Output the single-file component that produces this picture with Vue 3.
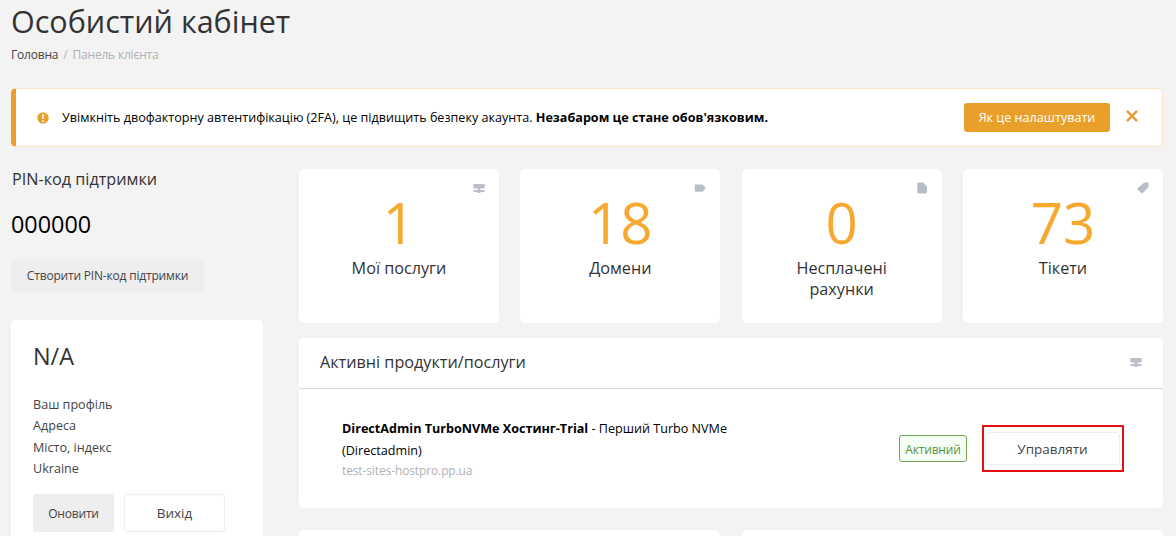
<script setup>
import { ref } from 'vue'

const showAlert = ref(true)

const stats = [
  { icon: 'server', value: 1, label: 'Мої послуги' },
  { icon: 'domain', value: 18, label: 'Домени' },
  { icon: 'invoice', value: 0, label: 'Несплачені рахунки' },
  { icon: 'ticket', value: 73, label: 'Тікети' }
]

const icons = {
  server: 'M.4 2h11.2v4.4H.4z M5 6.3h2v1.3H5z M.4 8h3.8l.6-.8h2.4l.6.8h3.8v1.9H7.8l-.6 1H4.8l-.6-1H.4z',
  domain: 'M.8 2.4h7.4q.6 0 1 .5l2.5 3.2-2.5 3.2q-.4.5-1 .5H.8z',
  invoice: 'M2.1.6h5l3.9 4v6q0 .8-.8.8H2.1q-.8 0-.8-.8V1.4q0-.8.8-.8z',
  ticket: 'M6.6 1q.4-.4 1-.4h3.2q.8 0 .8.8v3.1q0 .6-.4 1l-5.5 5.4q-.6.6-1.2 0L.6 7.5q-.6-.6 0-1.2z'
}

const profile = ['Ваш профіль', 'Адреса', 'Місто, індекс', 'Ukraine']
</script>

<template>
  <div class="page">
    <h1>Особистий кабінет</h1>
    <nav class="breadcrumb">
      <a>Головна</a><span class="separator">/</span><span>Панель клієнта</span>
    </nav>

    <div v-if="showAlert" class="alert">
      <svg class="alert-icon" viewBox="0 0 12 12">
        <circle cx="6" cy="6" r="5.7" fill="#e9a02b" />
        <path d="M6 3v3" stroke="#fff" stroke-width="1.8" stroke-linecap="round" />
        <circle cx="6" cy="8.9" r="1" fill="#fff" />
      </svg>
      <p>
        Увімкніть двофакторну автентифікацію (2FA), це підвищить безпеку акаунта.
        <strong>Незабаром це стане обов'язковим.</strong>
      </p>
      <button class="btn-warning">Як це налаштувати</button>
      <button class="close" @click="showAlert = false">
        <svg viewBox="0 0 12 12">
          <path d="M1.7 1.7l8.6 8.6M10.3 1.7l-8.6 8.6" stroke="#e5a03a" stroke-width="2.5" stroke-linecap="round" />
        </svg>
      </button>
    </div>

    <div class="columns">
      <aside class="sidebar">
        <h4>PIN-код підтримки</h4>
        <div class="pin">000000</div>
        <button class="btn-pin">Створити PIN-код підтримки</button>

        <div class="card profile">
          <h2>N/A</h2>
          <ul>
            <li v-for="line in profile" :key="line">{{ line }}</li>
          </ul>
          <div class="profile-buttons">
            <button class="btn-update">Оновити</button>
            <button class="btn-outline">Вихід</button>
          </div>
        </div>
      </aside>

      <main>
        <div class="stats">
          <div v-for="stat in stats" :key="stat.icon" class="card stat">
            <svg class="icon stat-icon" viewBox="0 0 12 12"><path :d="icons[stat.icon]" /></svg>
            <div class="value">{{ stat.value }}</div>
            <div class="label">{{ stat.label }}</div>
          </div>
        </div>

        <section class="card products">
          <header>
            <h3>Активні продукти/послуги</h3>
            <svg class="icon" viewBox="0 0 12 12"><path :d="icons.server" /></svg>
          </header>
          <div class="product">
            <div class="product-info">
              <div><strong>DirectAdmin TurboNVMe Хостинг-Trial</strong> - Перший Turbo NVMe (Directadmin)</div>
              <div class="domain">test-sites-hostpro.pp.ua</div>
            </div>
            <span class="status">Активний</span>
            <div class="highlight">
              <button class="btn-outline btn-manage">Управляти</button>
            </div>
          </div>
        </section>

        <div class="panels">
          <section class="card"></section>
          <section class="card"></section>
        </div>
      </main>
    </div>
  </div>
</template>

<style>
body {
  background: #f3f3f3;
  overflow: hidden;
}
</style>

<style scoped>
.page {
  box-sizing: border-box;
  height: 536px;
  padding: 1px 13px 0 11px;
  overflow: hidden;
  background: #f3f3f3;
  color: #000;
  font-family: "Open Sans", "Noto Sans", sans-serif;
  font-size: 12.6px;
}

.page * {
  box-sizing: border-box;
}

h1, h2, h3, h4, p, ul {
  margin: 0;
  padding: 0;
  font-weight: 400;
  color: #333;
}

button {
  padding: 0;
  border: none;
  font-family: inherit;
  font-size: 12px;
  letter-spacing: -0.19px;
  color: #444;
  cursor: pointer;
}

.card {
  background: #fff;
  border-radius: 5px;
}

.icon {
  width: 12px;
  height: 12px;
  fill: #b9bdc8;
}

h1 {
  font-size: 30.5px;
  line-height: 41px;
}

.breadcrumb {
  margin-top: 4px;
  font-size: 12px;
  letter-spacing: -0.2px;
  line-height: 18px;
  color: #aeb1b8;
}

.breadcrumb a {
  color: #444;
}

.separator {
  margin: 0 5px;
}

.alert {
  display: flex;
  align-items: center;
  height: 59px;
  margin-top: 24px;
  padding: 0 24px 0 21px;
  background: #fff;
  border: 1px solid #fbe3c3;
  border-left: 5px solid #e9a02b;
  border-radius: 5px;
}

.alert-icon {
  width: 12px;
  height: 12px;
  margin-right: 13px;
}

.alert p {
  flex: 1;
  padding-bottom: 1px;
  color: #000;
  white-space: nowrap;
}

.btn-warning {
  width: 146px;
  height: 29px;
  background: #e9a02b;
  border-radius: 3px;
  color: #fff;
  font-size: 12.6px;
  letter-spacing: 0;
}

.close {
  width: 12px;
  height: 12px;
  margin: -3px 0 0 16px;
  background: none;
}

.close svg {
  display: block;
}

.columns {
  display: flex;
  gap: 36px;
  margin-top: 22px;
}

.sidebar {
  width: 252px;
}

h4 {
  padding-left: 1px;
  font-size: 16.2px;
  line-height: 20px;
}

.pin {
  margin: 20px 0;
  font-size: 23.4px;
  line-height: 30px;
}

.btn-pin {
  display: block;
  width: 193px;
  height: 33px;
  background: #eee;
  border-radius: 3px;
}

.profile {
  height: 300px;
  margin-top: 28px;
  padding: 21px 22px;
}

h2 {
  font-size: 23.4px;
  line-height: 30px;
}

ul {
  margin-top: 23px;
  list-style: none;
  line-height: 21.4px;
  color: #444;
}

.profile-buttons {
  display: flex;
  gap: 10px;
  margin-top: 14.4px;
}

.btn-update {
  width: 81px;
  height: 38px;
  background: #eee;
  border-radius: 3px;
}

.btn-outline {
  width: 101px;
  height: 38px;
  background: #fff;
  border: 1px solid #eee;
  border-radius: 3px;
  font-size: 13.5px;
  letter-spacing: 0;
}

main {
  flex: 1;
}

.stats {
  display: grid;
  grid-template-columns: repeat(4, 200px);
  justify-content: space-between;
}

.stat {
  position: relative;
  height: 154px;
  padding: 29px 40px 0;
  text-align: center;
}

.stat-icon {
  position: absolute;
  top: 13px;
  right: 14px;
}

.value {
  font-size: 56.5px;
  line-height: 50px;
  color: #f7a92f;
}

.label {
  margin-top: 10px;
  font-size: 16.2px;
  line-height: 21px;
  color: #333;
}

.products {
  height: 170px;
  margin-top: 15px;
}

.products header {
  display: flex;
  align-items: center;
  justify-content: space-between;
  height: 51px;
  padding: 0 21px 2px;
  border-bottom: 1px solid #d9d9d9;
}

h3 {
  font-size: 16.2px;
}

.product {
  display: flex;
  align-items: center;
  height: 119px;
  padding: 0 39px 0 43px;
}

.product-info {
  width: 400px;
  margin-right: auto;
  padding-top: 2px;
  line-height: 21.4px;
}

.domain {
  font-size: 12px;
  letter-spacing: -0.12px;
  line-height: 20px;
  color: #aeb1b8;
}

.status {
  width: 68px;
  height: 27px;
  border: 1px solid #73a554;
  border-radius: 3px;
  background: #f6fff4;
  color: #5b9140;
  font-size: 12px;
  letter-spacing: -0.19px;
  line-height: 27px;
  text-align: center;
}

.highlight {
  width: 142px;
  height: 47px;
  margin-left: 15px;
  padding: 5px 1px;
  border: 2px solid #e60f0f;
}

.btn-manage {
  width: 135px;
  height: 33px;
}

.panels {
  display: grid;
  grid-template-columns: 1fr 1fr;
  gap: 22px;
  margin-top: 22px;
}

.panels .card {
  height: 100px;
}
</style>
